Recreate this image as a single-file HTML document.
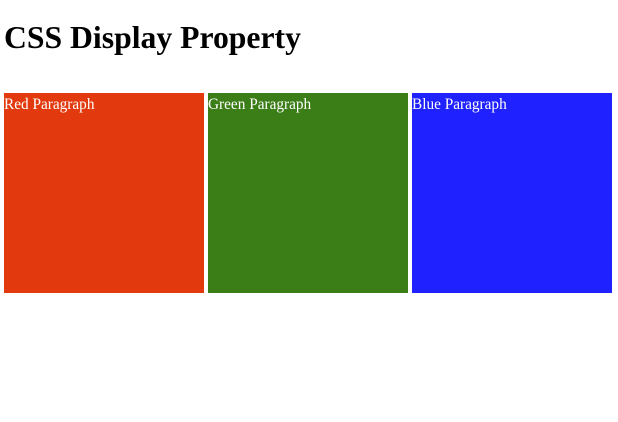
<!DOCTYPE html>
<html><head><style>
html,body{margin:0;padding:0;background:#fff;width:618px;height:422px;overflow:hidden;font-family:"Liberation Serif",serif;}
h1{position:absolute;left:4px;top:19px;margin:0;font-size:31.7px;line-height:37px;font-weight:bold;color:#000;}
.b{position:absolute;top:93px;width:200px;height:200px;color:#fff;font-size:15.3px;line-height:19px;}
.b span{position:relative;top:2px;}
</style></head><body>
<h1>CSS Display Property</h1>
<div class="b" style="left:4px;background:#e23a0e"><span>Red Paragraph</span></div>
<div class="b" style="left:208px;background:#3b7d17"><span>Green Paragraph</span></div>
<div class="b" style="left:412px;background:#1f21fe"><span>Blue Paragraph</span></div>
</body></html>
